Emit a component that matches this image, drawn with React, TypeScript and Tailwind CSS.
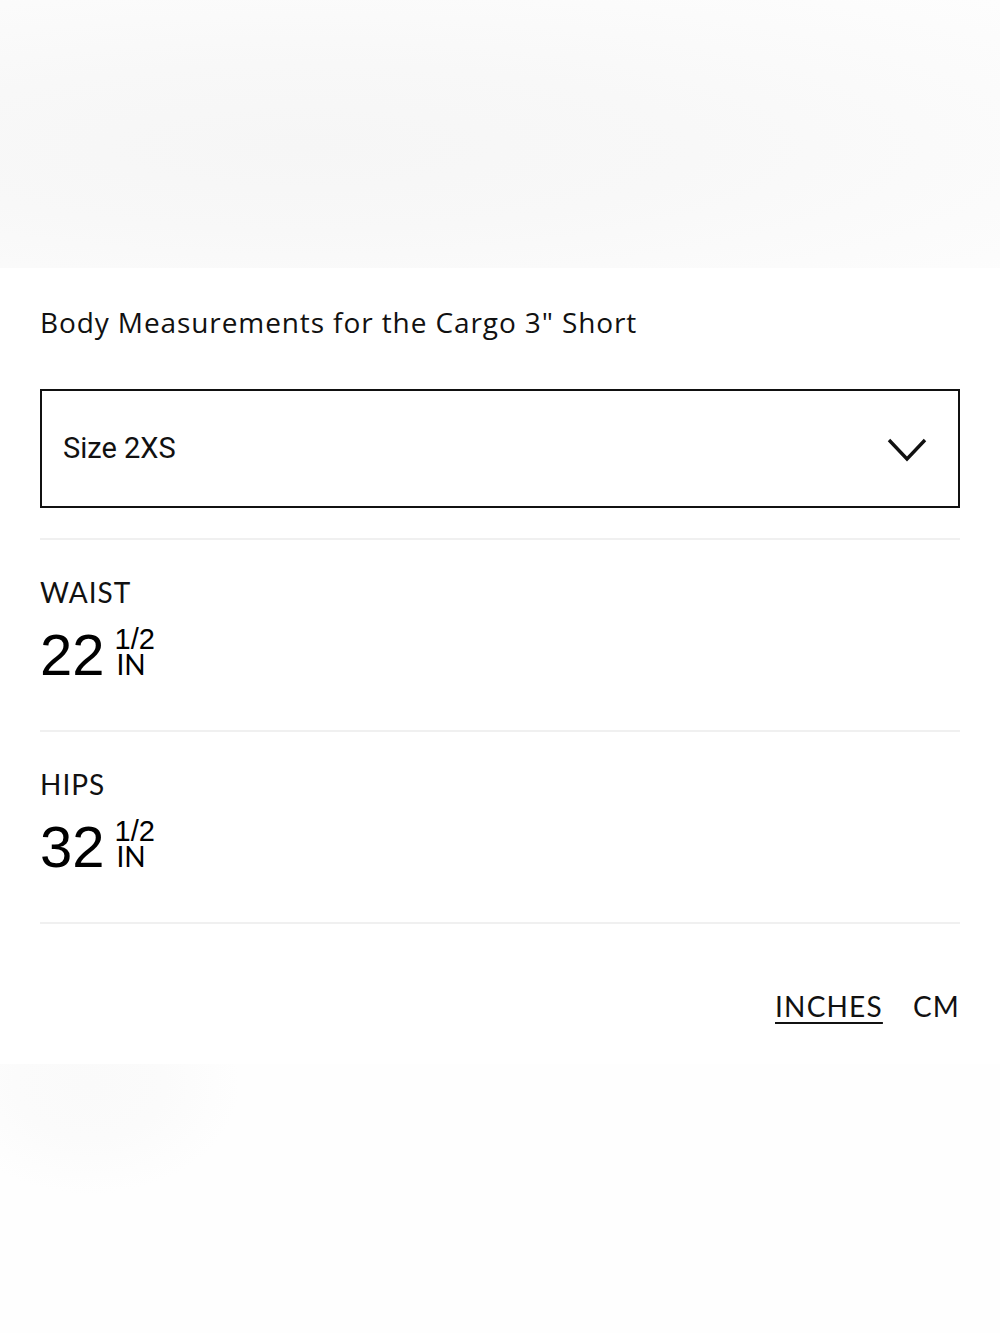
import React, { useState } from 'react';

type Measurement = {
    label: string;
    whole: string;
    fraction: string;
};

const measurements: Measurement[] = [
    { label: 'WAIST', whole: '22', fraction: '1/2' },
    { label: 'HIPS', whole: '32', fraction: '1/2' },
];

const Chevron = () => (
    <svg width="40" height="26" viewBox="0 0 40 26" fill="none" stroke="currentColor" strokeWidth="3.4">
        <path d="M2 3 L20 22 L38 3" />
    </svg>
);

const MeasurementRow = ({ item }: { item: Measurement }) => (
    <div className="border-t-2 border-[#f0f0f0] pt-[34px] pb-[46px]">
        <div className="font-['Lato',sans-serif] text-[28px] leading-[36px] text-[#111] tracking-[1px]">{item.label}</div>
        <div className="mt-[16px] flex items-end">
            <span className="font-['Liberation_Sans',Arial,sans-serif] text-[58px] leading-[58px] text-black">{item.whole}</span>
            <span className="ml-[10px] mb-[7px] flex flex-col font-['Liberation_Sans',Arial,sans-serif] text-[29px] leading-[25px] text-black">
                <span>{item.fraction}</span>
                <span className="font-['Lato',sans-serif] text-[28px] pl-[2px]">IN</span>
            </span>
        </div>
    </div>
);

export default function App() {
    const [unit, setUnit] = useState<'in' | 'cm'>('in');

    return (
        <div className="min-h-[1333px] flex flex-col bg-white">
            {/* backdrop above the sheet */}
            <div className="h-[268px] bg-[radial-gradient(ellipse_at_30%_55%,#f6f6f6_0%,#f8f8f8_40%,#fbfbfb_75%,#fdfdfd_100%)]" />

            <div className="bg-white px-10 pt-[36px] pb-[40px]">
                <h2 className="font-['Open_Sans',sans-serif] text-[28px] leading-[36px] tracking-[0.9px] text-[#111]">
                    Body Measurements for the Cargo 3&quot; Short
                </h2>

                <button className="mt-[49px] flex h-[119px] w-full items-center justify-between border-2 border-[#111] pl-[21px] pr-[31px] text-left">
                    <span className="font-['Roboto',sans-serif] text-[29px] text-[#111]">Size 2XS</span>
                    <span className="mt-[2px] text-[#111]">
                        <Chevron />
                    </span>
                </button>

                <div className="mt-[30px]">
                    {measurements.map((m) => (
                        <MeasurementRow key={m.label} item={m} />
                    ))}
                    <div className="border-t-2 border-[#f0f0f0]" />
                </div>

                <div className="mt-[64px] flex justify-end gap-[30px] font-['Lato',sans-serif] text-[28px] leading-[36px] tracking-[1.2px] text-[#111]">
                    <button
                        onClick={() => setUnit('in')}
                        className={unit === 'in' ? 'underline decoration-2 underline-offset-[5px]' : ''}
                    >
                        INCHES
                    </button>
                    <button
                        onClick={() => setUnit('cm')}
                        className={unit === 'cm' ? 'underline decoration-2 underline-offset-[5px]' : ''}
                    >
                        CM
                    </button>
                </div>
            </div>

            {/* backdrop below the sheet */}
            <div className="flex-1 bg-[radial-gradient(ellipse_150px_110px_at_90px_20px,#fafafa_0%,#fbfbfb_50%,#fefefe_100%),radial-gradient(ellipse_220px_260px_at_850px_180px,#f9f9f9_0%,#fbfbfb_50%,#fefefe_100%)]" />
        </div>
    );
}
